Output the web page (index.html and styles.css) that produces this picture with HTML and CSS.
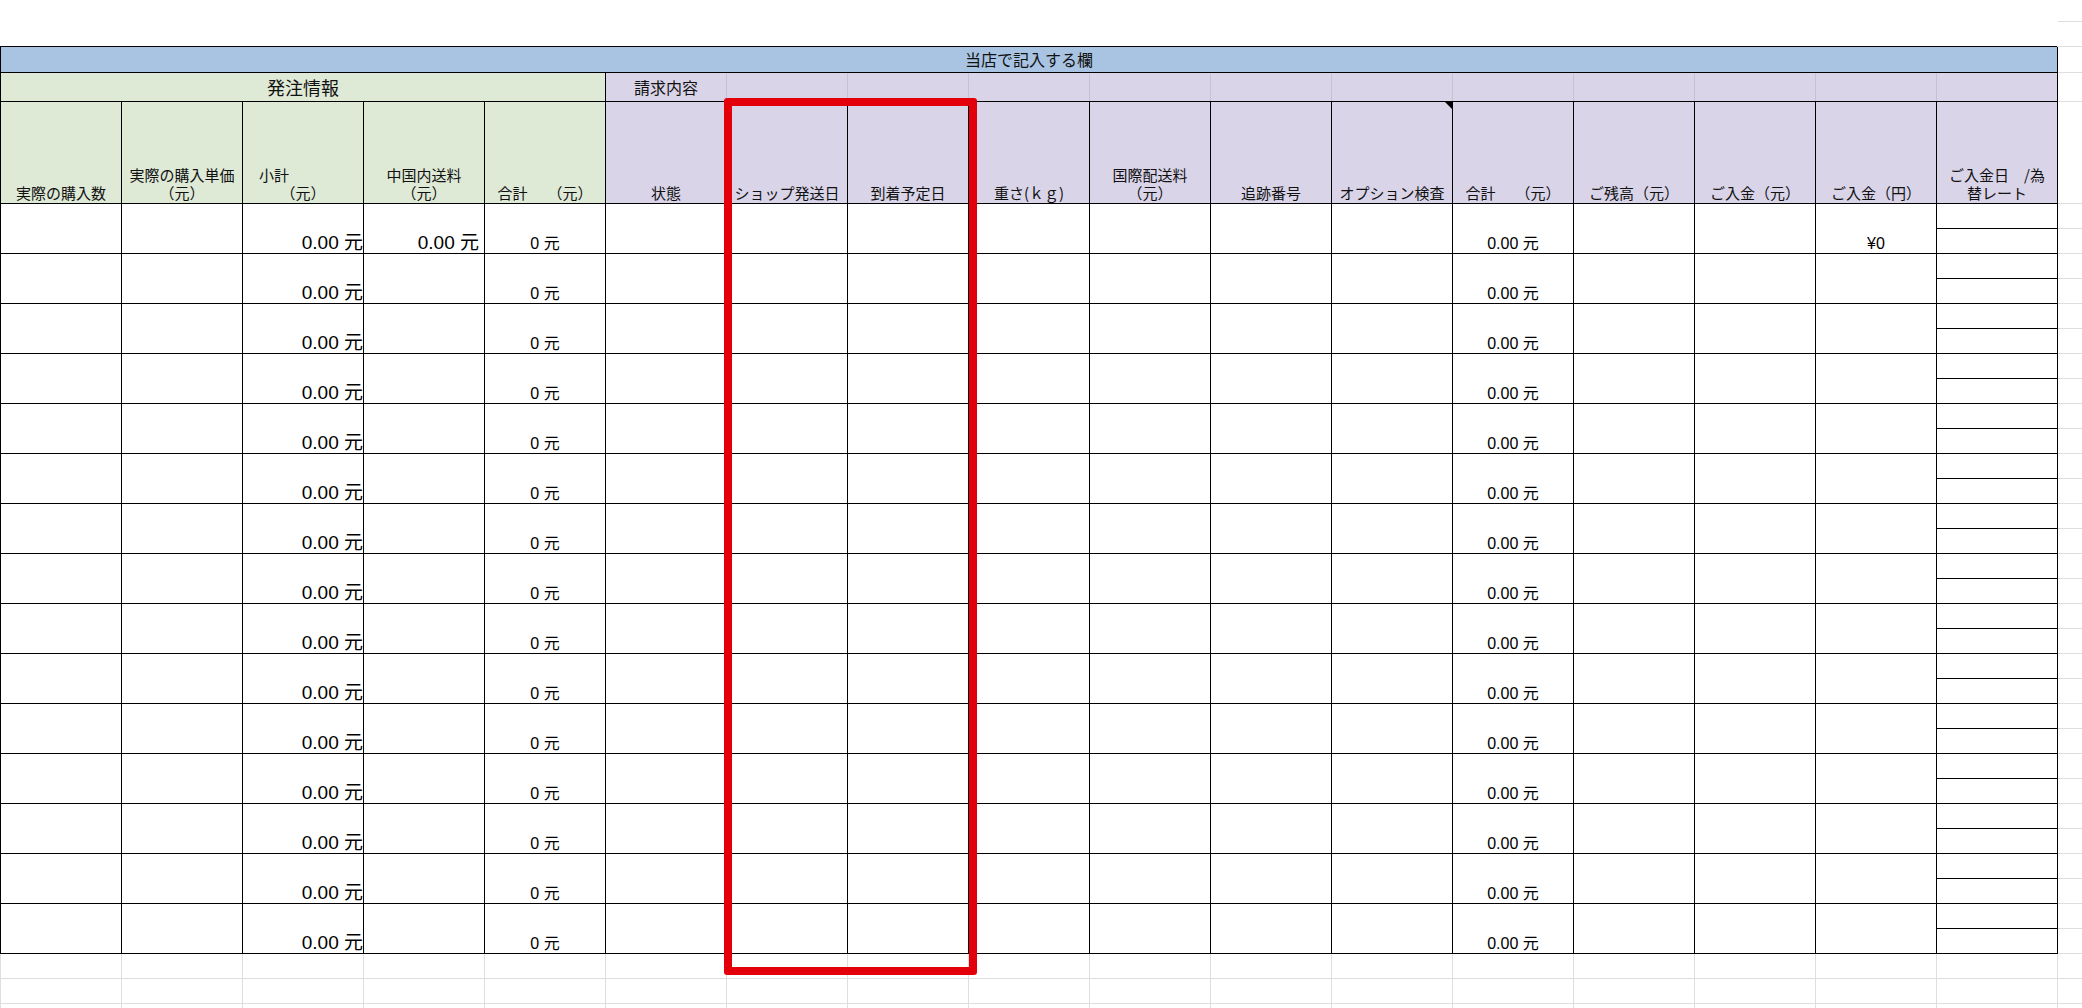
FILE: index.html
```html
<!DOCTYPE html>
<html lang="ja">
<head>
<meta charset="utf-8">
<title>当店で記入する欄</title>
<link rel="stylesheet" href="styles.css">
</head>
<body>
<div class="sheet">
<table class="grid">
<colgroup>
<col class="w"><col class="w"><col class="w"><col class="w"><col class="w"><col class="w"><col class="w"><col class="w"><col class="w"><col class="w"><col class="w"><col class="w"><col class="w"><col class="w"><col class="w"><col class="w"><col class="w"><col class="xc">
</colgroup>
<tr class="r21"><td colspan="17"></td><td class="xt"></td></tr>
<tr class="r25"><td colspan="17"></td><td class="x"></td></tr>
<tr class="r26"><td colspan="17" class="title">当店で記入する欄</td><td class="x"></td></tr>
<tr class="r29">
<td colspan="5" class="sec-g">発注情報</td>
<td class="sec-p lbl">請求内容</td>
<td class="sec-p"></td><td class="sec-p"></td><td class="sec-p"></td><td class="sec-p"></td><td class="sec-p"></td><td class="sec-p"></td><td class="sec-p"></td><td class="sec-p"></td><td class="sec-p"></td><td class="sec-p"></td><td class="sec-p end"></td>
<td class="x"></td>
</tr>
<tr class="r102">
<th class="h g">実際の購入数</th>
<th class="h g">実際の購入単価<br>（元）</th>
<th class="h g"><span class="l1">小計</span>（元）</th>
<th class="h g">中国内送料<br>（元）</th>
<th class="h g">合計<span class="gap"></span>（元）</th>
<th class="h p">状態</th>
<th class="h p">ショップ発送日</th>
<th class="h p">到着予定日</th>
<th class="h p">重さ(ｋｇ)</th>
<th class="h p">国際配送料<br>（元）</th>
<th class="h p">追跡番号</th>
<th class="h p note">オプション検査<span class="tri"></span></th>
<th class="h p">合計<span class="gap"></span>（元）</th>
<th class="h p">ご残高（元）</th>
<th class="h p">ご入金（元）</th>
<th class="h p">ご入金（円）</th>
<th class="h p">ご入金日　/為<br>替レート</th>
<td class="x"></td>
</tr>

<tr class="r25"><td class="c" rowspan="2"></td><td class="c" rowspan="2"></td><td class="c v18" rowspan="2">0.00 元</td><td class="c v18 r4" rowspan="2">0.00 元</td><td class="c v15" rowspan="2">0 元</td><td class="c" rowspan="2"></td><td class="c" rowspan="2"></td><td class="c" rowspan="2"></td><td class="c" rowspan="2"></td><td class="c" rowspan="2"></td><td class="c" rowspan="2"></td><td class="c" rowspan="2"></td><td class="c v15" rowspan="2">0.00 元</td><td class="c" rowspan="2"></td><td class="c" rowspan="2"></td><td class="c v15" rowspan="2">¥0</td><td class="c"></td><td class="x"></td></tr>
<tr class="r25"><td class="c"></td><td class="x"></td></tr>

<tr class="r25"><td class="c" rowspan="2"></td><td class="c" rowspan="2"></td><td class="c v18" rowspan="2">0.00 元</td><td class="c" rowspan="2"></td><td class="c v15" rowspan="2">0 元</td><td class="c" rowspan="2"></td><td class="c" rowspan="2"></td><td class="c" rowspan="2"></td><td class="c" rowspan="2"></td><td class="c" rowspan="2"></td><td class="c" rowspan="2"></td><td class="c" rowspan="2"></td><td class="c v15" rowspan="2">0.00 元</td><td class="c" rowspan="2"></td><td class="c" rowspan="2"></td><td class="c" rowspan="2"></td><td class="c"></td><td class="x"></td></tr>
<tr class="r25"><td class="c"></td><td class="x"></td></tr>

<tr class="r25"><td class="c" rowspan="2"></td><td class="c" rowspan="2"></td><td class="c v18" rowspan="2">0.00 元</td><td class="c" rowspan="2"></td><td class="c v15" rowspan="2">0 元</td><td class="c" rowspan="2"></td><td class="c" rowspan="2"></td><td class="c" rowspan="2"></td><td class="c" rowspan="2"></td><td class="c" rowspan="2"></td><td class="c" rowspan="2"></td><td class="c" rowspan="2"></td><td class="c v15" rowspan="2">0.00 元</td><td class="c" rowspan="2"></td><td class="c" rowspan="2"></td><td class="c" rowspan="2"></td><td class="c"></td><td class="x"></td></tr>
<tr class="r25"><td class="c"></td><td class="x"></td></tr>

<tr class="r25"><td class="c" rowspan="2"></td><td class="c" rowspan="2"></td><td class="c v18" rowspan="2">0.00 元</td><td class="c" rowspan="2"></td><td class="c v15" rowspan="2">0 元</td><td class="c" rowspan="2"></td><td class="c" rowspan="2"></td><td class="c" rowspan="2"></td><td class="c" rowspan="2"></td><td class="c" rowspan="2"></td><td class="c" rowspan="2"></td><td class="c" rowspan="2"></td><td class="c v15" rowspan="2">0.00 元</td><td class="c" rowspan="2"></td><td class="c" rowspan="2"></td><td class="c" rowspan="2"></td><td class="c"></td><td class="x"></td></tr>
<tr class="r25"><td class="c"></td><td class="x"></td></tr>

<tr class="r25"><td class="c" rowspan="2"></td><td class="c" rowspan="2"></td><td class="c v18" rowspan="2">0.00 元</td><td class="c" rowspan="2"></td><td class="c v15" rowspan="2">0 元</td><td class="c" rowspan="2"></td><td class="c" rowspan="2"></td><td class="c" rowspan="2"></td><td class="c" rowspan="2"></td><td class="c" rowspan="2"></td><td class="c" rowspan="2"></td><td class="c" rowspan="2"></td><td class="c v15" rowspan="2">0.00 元</td><td class="c" rowspan="2"></td><td class="c" rowspan="2"></td><td class="c" rowspan="2"></td><td class="c"></td><td class="x"></td></tr>
<tr class="r25"><td class="c"></td><td class="x"></td></tr>

<tr class="r25"><td class="c" rowspan="2"></td><td class="c" rowspan="2"></td><td class="c v18" rowspan="2">0.00 元</td><td class="c" rowspan="2"></td><td class="c v15" rowspan="2">0 元</td><td class="c" rowspan="2"></td><td class="c" rowspan="2"></td><td class="c" rowspan="2"></td><td class="c" rowspan="2"></td><td class="c" rowspan="2"></td><td class="c" rowspan="2"></td><td class="c" rowspan="2"></td><td class="c v15" rowspan="2">0.00 元</td><td class="c" rowspan="2"></td><td class="c" rowspan="2"></td><td class="c" rowspan="2"></td><td class="c"></td><td class="x"></td></tr>
<tr class="r25"><td class="c"></td><td class="x"></td></tr>

<tr class="r25"><td class="c" rowspan="2"></td><td class="c" rowspan="2"></td><td class="c v18" rowspan="2">0.00 元</td><td class="c" rowspan="2"></td><td class="c v15" rowspan="2">0 元</td><td class="c" rowspan="2"></td><td class="c" rowspan="2"></td><td class="c" rowspan="2"></td><td class="c" rowspan="2"></td><td class="c" rowspan="2"></td><td class="c" rowspan="2"></td><td class="c" rowspan="2"></td><td class="c v15" rowspan="2">0.00 元</td><td class="c" rowspan="2"></td><td class="c" rowspan="2"></td><td class="c" rowspan="2"></td><td class="c"></td><td class="x"></td></tr>
<tr class="r25"><td class="c"></td><td class="x"></td></tr>

<tr class="r25"><td class="c" rowspan="2"></td><td class="c" rowspan="2"></td><td class="c v18" rowspan="2">0.00 元</td><td class="c" rowspan="2"></td><td class="c v15" rowspan="2">0 元</td><td class="c" rowspan="2"></td><td class="c" rowspan="2"></td><td class="c" rowspan="2"></td><td class="c" rowspan="2"></td><td class="c" rowspan="2"></td><td class="c" rowspan="2"></td><td class="c" rowspan="2"></td><td class="c v15" rowspan="2">0.00 元</td><td class="c" rowspan="2"></td><td class="c" rowspan="2"></td><td class="c" rowspan="2"></td><td class="c"></td><td class="x"></td></tr>
<tr class="r25"><td class="c"></td><td class="x"></td></tr>

<tr class="r25"><td class="c" rowspan="2"></td><td class="c" rowspan="2"></td><td class="c v18" rowspan="2">0.00 元</td><td class="c" rowspan="2"></td><td class="c v15" rowspan="2">0 元</td><td class="c" rowspan="2"></td><td class="c" rowspan="2"></td><td class="c" rowspan="2"></td><td class="c" rowspan="2"></td><td class="c" rowspan="2"></td><td class="c" rowspan="2"></td><td class="c" rowspan="2"></td><td class="c v15" rowspan="2">0.00 元</td><td class="c" rowspan="2"></td><td class="c" rowspan="2"></td><td class="c" rowspan="2"></td><td class="c"></td><td class="x"></td></tr>
<tr class="r25"><td class="c"></td><td class="x"></td></tr>

<tr class="r25"><td class="c" rowspan="2"></td><td class="c" rowspan="2"></td><td class="c v18" rowspan="2">0.00 元</td><td class="c" rowspan="2"></td><td class="c v15" rowspan="2">0 元</td><td class="c" rowspan="2"></td><td class="c" rowspan="2"></td><td class="c" rowspan="2"></td><td class="c" rowspan="2"></td><td class="c" rowspan="2"></td><td class="c" rowspan="2"></td><td class="c" rowspan="2"></td><td class="c v15" rowspan="2">0.00 元</td><td class="c" rowspan="2"></td><td class="c" rowspan="2"></td><td class="c" rowspan="2"></td><td class="c"></td><td class="x"></td></tr>
<tr class="r25"><td class="c"></td><td class="x"></td></tr>

<tr class="r25"><td class="c" rowspan="2"></td><td class="c" rowspan="2"></td><td class="c v18" rowspan="2">0.00 元</td><td class="c" rowspan="2"></td><td class="c v15" rowspan="2">0 元</td><td class="c" rowspan="2"></td><td class="c" rowspan="2"></td><td class="c" rowspan="2"></td><td class="c" rowspan="2"></td><td class="c" rowspan="2"></td><td class="c" rowspan="2"></td><td class="c" rowspan="2"></td><td class="c v15" rowspan="2">0.00 元</td><td class="c" rowspan="2"></td><td class="c" rowspan="2"></td><td class="c" rowspan="2"></td><td class="c"></td><td class="x"></td></tr>
<tr class="r25"><td class="c"></td><td class="x"></td></tr>

<tr class="r25"><td class="c" rowspan="2"></td><td class="c" rowspan="2"></td><td class="c v18" rowspan="2">0.00 元</td><td class="c" rowspan="2"></td><td class="c v15" rowspan="2">0 元</td><td class="c" rowspan="2"></td><td class="c" rowspan="2"></td><td class="c" rowspan="2"></td><td class="c" rowspan="2"></td><td class="c" rowspan="2"></td><td class="c" rowspan="2"></td><td class="c" rowspan="2"></td><td class="c v15" rowspan="2">0.00 元</td><td class="c" rowspan="2"></td><td class="c" rowspan="2"></td><td class="c" rowspan="2"></td><td class="c"></td><td class="x"></td></tr>
<tr class="r25"><td class="c"></td><td class="x"></td></tr>

<tr class="r25"><td class="c" rowspan="2"></td><td class="c" rowspan="2"></td><td class="c v18" rowspan="2">0.00 元</td><td class="c" rowspan="2"></td><td class="c v15" rowspan="2">0 元</td><td class="c" rowspan="2"></td><td class="c" rowspan="2"></td><td class="c" rowspan="2"></td><td class="c" rowspan="2"></td><td class="c" rowspan="2"></td><td class="c" rowspan="2"></td><td class="c" rowspan="2"></td><td class="c v15" rowspan="2">0.00 元</td><td class="c" rowspan="2"></td><td class="c" rowspan="2"></td><td class="c" rowspan="2"></td><td class="c"></td><td class="x"></td></tr>
<tr class="r25"><td class="c"></td><td class="x"></td></tr>

<tr class="r25"><td class="c" rowspan="2"></td><td class="c" rowspan="2"></td><td class="c v18" rowspan="2">0.00 元</td><td class="c" rowspan="2"></td><td class="c v15" rowspan="2">0 元</td><td class="c" rowspan="2"></td><td class="c" rowspan="2"></td><td class="c" rowspan="2"></td><td class="c" rowspan="2"></td><td class="c" rowspan="2"></td><td class="c" rowspan="2"></td><td class="c" rowspan="2"></td><td class="c v15" rowspan="2">0.00 元</td><td class="c" rowspan="2"></td><td class="c" rowspan="2"></td><td class="c" rowspan="2"></td><td class="c"></td><td class="x"></td></tr>
<tr class="r25"><td class="c"></td><td class="x"></td></tr>

<tr class="r25"><td class="c" rowspan="2"></td><td class="c" rowspan="2"></td><td class="c v18" rowspan="2">0.00 元</td><td class="c" rowspan="2"></td><td class="c v15" rowspan="2">0 元</td><td class="c" rowspan="2"></td><td class="c" rowspan="2"></td><td class="c" rowspan="2"></td><td class="c" rowspan="2"></td><td class="c" rowspan="2"></td><td class="c" rowspan="2"></td><td class="c" rowspan="2"></td><td class="c v15" rowspan="2">0.00 元</td><td class="c" rowspan="2"></td><td class="c" rowspan="2"></td><td class="c" rowspan="2"></td><td class="c"></td><td class="x"></td></tr>
<tr class="r25"><td class="c"></td><td class="x"></td></tr>

<tr class="r25"><td class="g"></td><td class="g"></td><td class="g"></td><td class="g"></td><td class="g"></td><td class="g"></td><td class="g"></td><td class="g"></td><td class="g"></td><td class="g"></td><td class="g"></td><td class="g"></td><td class="g"></td><td class="g"></td><td class="g"></td><td class="g"></td><td class="g"></td><td class="x"></td></tr>
<tr class="r25"><td class="g"></td><td class="g"></td><td class="g"></td><td class="g"></td><td class="g"></td><td class="g"></td><td class="g"></td><td class="g"></td><td class="g"></td><td class="g"></td><td class="g"></td><td class="g"></td><td class="g"></td><td class="g"></td><td class="g"></td><td class="g"></td><td class="g"></td><td class="x"></td></tr>
<tr class="r25"><td class="g"></td><td class="g"></td><td class="g"></td><td class="g"></td><td class="g"></td><td class="g"></td><td class="g"></td><td class="g"></td><td class="g"></td><td class="g"></td><td class="g"></td><td class="g"></td><td class="g"></td><td class="g"></td><td class="g"></td><td class="g"></td><td class="g"></td><td class="x"></td></tr>
</table>
<div class="mark"></div>
</div>
</body>
</html>
```

FILE: styles.css
```css
html, body {
  margin: 0;
  padding: 0;
  background: #ffffff;
}

body {
  font-family: "Noto Sans CJK JP", "Noto Sans", sans-serif;
  color: #000000;
}

.sheet {
  position: relative;
  width: 2082px;
  height: 1008px;
  overflow: hidden;
}

.grid {
  border-collapse: collapse;
  table-layout: fixed;
  width: 2082px;
}

.grid col.w { width: 121px; }
.grid col.xc { width: 25px; }

.grid td,
.grid th {
  padding: 0;
}

.r21 { height: 21px; }
.r25 { height: 25px; }
.r26 { height: 26px; }
.r29 { height: 29px; }
.r102 { height: 102px; }

/* spreadsheet gridlines outside the form */
.xt {
  border-bottom: 1px solid #dedede;
}
.x {
  border-top: 1px solid #dedede;
  border-bottom: 1px solid #dedede;
}
.g {
  border: 1px solid #dedede;
}

/* title band */
.title {
  background: #a8c4e2;
  border: 1px solid #000;
  text-align: center;
  vertical-align: middle;
  font-size: 16px;
  line-height: 18px;
  color: #111;
}

/* section row */
.sec-g {
  background: #dee9d6;
  border: 1px solid #000;
  text-align: center;
  vertical-align: middle;
  font-size: 18px;
  line-height: 20px;
  padding-bottom: 1px;
  color: #111;
}
.sec-p {
  background: #d9d4e8;
  border-top: 1px solid #000;
  border-bottom: 1px solid #000;
  border-left: 1px solid #c6c1d3;
  border-right: 1px solid #c6c1d3;
}
.sec-p.end {
  border-right: 1px solid #000;
}
.sec-p.lbl {
  text-align: center;
  vertical-align: middle;
  font-size: 16px;
  line-height: 18px;
  padding-top: 1px;
  color: #111;
}

/* column headers */
.h {
  border: 1px solid #000;
  font-weight: normal;
  font-size: 15px;
  line-height: 18.5px;
  text-align: center;
  vertical-align: bottom;
  white-space: nowrap;
  padding: 0 0 9px 0;
  color: #111;
}
.h.g { background: #dee9d6; border: 1px solid #000; }
.h.p { background: #d9d4e8; }

.l1 {
  display: block;
  text-align: left;
  padding-left: 16px;
}

.gap {
  display: inline-block;
  width: 20px;
}

.note {
  position: relative;
}
.tri {
  position: absolute;
  top: 0;
  right: 0;
  width: 0;
  height: 0;
  border-top: 7px solid #000;
  border-left: 7px solid transparent;
}

/* data cells */
.c {
  border: 1px solid #000;
  vertical-align: bottom;
  white-space: nowrap;
  padding: 0;
}
.v18 {
  font-family: "Liberation Sans", "Noto Sans CJK JP", sans-serif;
  font-size: 19px;
  line-height: 21px;
  text-align: right;
  padding-right: 3px;
  padding-bottom: 4px;
}
.v18.r4 {
  padding-right: 5px;
}
.v15 {
  font-family: "Liberation Sans", "Noto Sans CJK JP", sans-serif;
  font-size: 16px;
  line-height: 18px;
  text-align: center;
  padding-bottom: 3px;
}

/* red highlight frame drawn over the two date columns */
.mark {
  position: absolute;
  left: 724px;
  top: 98px;
  width: 253px;
  height: 877px;
  box-sizing: border-box;
  border: 8px solid #e3000b;
  border-radius: 3px;
}
```
